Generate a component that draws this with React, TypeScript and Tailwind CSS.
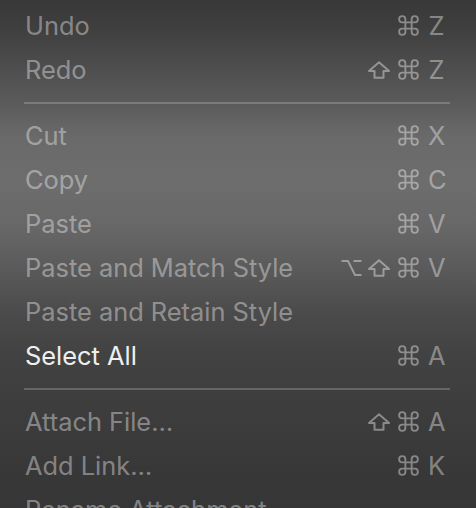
import React from 'react';
import { Command } from 'lucide-react';

type Item = { label: string; keys?: string[]; enabled?: boolean } | 'sep';

const items: Item[] = [
  { label: 'Undo', keys: ['cmd', 'Z'] },
  { label: 'Redo', keys: ['shift', 'cmd', 'Z'] },
  'sep',
  { label: 'Cut', keys: ['cmd', 'X'] },
  { label: 'Copy', keys: ['cmd', 'C'] },
  { label: 'Paste', keys: ['cmd', 'V'] },
  { label: 'Paste and Match Style', keys: ['opt', 'shift', 'cmd', 'V'] },
  { label: 'Paste and Retain Style' },
  { label: 'Select All', keys: ['cmd', 'A'], enabled: true },
  'sep',
  { label: 'Attach File…', keys: ['shift', 'cmd', 'A'] },
  { label: 'Add Link…', keys: ['cmd', 'K'] },
  { label: 'Rename Attachment' },
];

const Shift = () => (
  <svg width="22" height="18" viewBox="0 0 22 18" fill="none" stroke="currentColor" strokeWidth="2" strokeLinejoin="round">
    <path d="M11 1.2 L21 10 H15.5 V16.8 H6.5 V10 H1 Z" />
  </svg>
);

const Option = () => (
  <svg width="21" height="18" viewBox="0 0 21 18" fill="none" stroke="currentColor" strokeWidth="2" strokeLinecap="butt">
    <path d="M0.5 2 H7 L14 16 H20.5 M12.5 2 H20.5" />
  </svg>
);

const Keys: React.FC<{ keys: string[] }> = ({ keys }) => (
  <div className="flex items-center">
    {keys.map((k, i) => {
      if (k === 'cmd') return <Command key={i} size={25} strokeWidth={1.8} className="mr-[7px]" />;
      if (k === 'shift') return <span key={i} className="mr-[6px] flex"><Shift /></span>;
      if (k === 'opt') return <span key={i} className="mr-[6px] flex"><Option /></span>;
      return <span key={i} className="w-[17px] text-center">{k}</span>;
    })}
  </div>
);

export default function App() {
  return (
    <div className="w-full h-[508px] overflow-hidden bg-[linear-gradient(180deg,#393939_0%,#3e3e3e_5%,#5a5a5a_20%,#6a6a6a_27%,#6d6d6d_36%,#686868_44%,#5a5a5a_53%,#4a4a4a_62%,#424242_70%,#3c3c3c_83%,#383838_92%,#363636_100%)] font-['Inter','Liberation_Sans',sans-serif] text-[25.4px] pt-[4px]">
      {items.map((it, i) =>
        it === 'sep' ? (
          <div key={i} className="h-[22px] flex items-center pl-[24px] pr-[26px]">
            <div className="h-[2px] w-full bg-white/20" />
          </div>
        ) : (
          <div key={i} className="h-[44px] flex items-center justify-between pl-[25px] pr-[31px] text-white/40">
            <span className={it.enabled ? 'text-[#efefef]' : ''}>{it.label}</span>
            {it.keys && <Keys keys={it.keys} />}
          </div>
        )
      )}
    </div>
  );
}
